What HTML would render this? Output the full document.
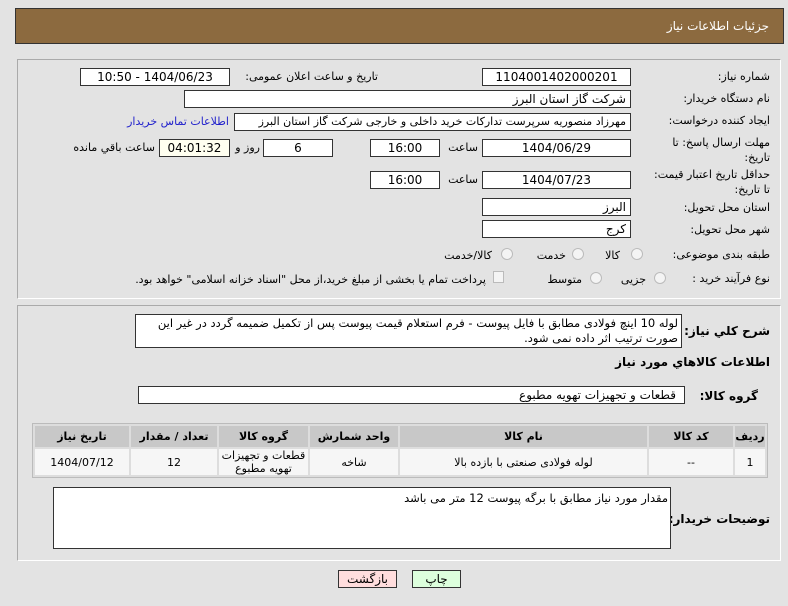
<!DOCTYPE html>
<html><head><meta charset="utf-8"><style>
body{margin:0;width:788px;height:606px;background:#e3e3e3;font-family:"DejaVu Sans","Liberation Sans",sans-serif;font-size:11px;color:#000;position:relative;overflow:hidden}
div,span{position:absolute;box-sizing:border-box}
.hdr{left:15px;top:8px;width:769px;height:36px;background:#8c6a3f;border:1px solid #333}
.hdr span{right:14px;top:10px;color:#fff;font-size:12px}
.pan{left:17px;width:764px;background:#e3e3e3;border:1px solid #aaa;border-right-color:#fff;border-bottom-color:#fff}
.box{background:#fff;border:1px solid #333;height:18px;line-height:16px;text-align:center;direction:rtl;font-size:12px;white-space:nowrap;overflow:hidden}
.l{direction:rtl;white-space:nowrap;font-size:11px}
.r{text-align:right;padding-right:4px}
.rad{width:12px;height:12px;border-radius:50%;border:1px solid #bbb;background:#f4f4f4}
table{position:absolute;border-collapse:separate;border-spacing:2px;direction:rtl;background:#ddd;border:1px solid #bbb}
th{background:#c8c8c8;height:21px;font-size:11px;padding:0}
td{background:#f6f6f6;height:26px;text-align:center;font-size:11px;padding:0}
.btn{height:18px;border:1px solid #333;text-align:center;line-height:16px;font-size:12px}
</style></head><body>
<div class="hdr"><span>جزئیات اطلاعات نیاز</span></div>
<div class="pan" style="top:59px;height:240px"></div>
<div class="pan" style="top:305px;height:256px"></div>

<div class="l" style="right:18px;top:70px">شماره نیاز:</div>
<div class="box" style="left:482px;top:68px;width:149px">1104001402000201</div>
<div class="l" style="right:410px;top:70px">تاریخ و ساعت اعلان عمومی:</div>
<div class="box" style="left:80px;top:68px;width:150px">1404/06/23 - 10:50</div>

<div class="l" style="right:18px;top:92px">نام دستگاه خریدار:</div>
<div class="box r" style="left:184px;top:90px;width:447px">شرکت گاز استان البرز</div>

<div class="l" style="right:18px;top:114px">ایجاد کننده درخواست:</div>
<div class="box r" style="left:234px;top:113px;width:397px;font-size:11px;letter-spacing:-0.3px">مهرزاد منصوریه سرپرست تدارکات خرید داخلی و خارجی شرکت گاز استان البرز</div>
<div class="l" style="right:559px;top:115px;color:#22c">اطلاعات تماس خریدار</div>

<div class="l" style="right:18px;top:135px;line-height:15px;text-align:right">مهلت ارسال پاسخ: تا<br>تاریخ:</div>
<div class="box" style="left:482px;top:139px;width:149px">1404/06/29</div>
<div class="l" style="right:310px;top:141px">ساعت</div>
<div class="box" style="left:370px;top:139px;width:70px">16:00</div>
<div class="box" style="left:263px;top:139px;width:70px">6</div>
<div class="l" style="right:528px;top:141px">روز و</div>
<div class="box" style="left:159px;top:139px;width:71px;background:#fffff0">04:01:32</div>
<div class="l" style="right:633px;top:141px">ساعت باقي مانده</div>

<div class="l" style="right:18px;top:167px;line-height:15px;text-align:right">حداقل تاریخ اعتبار قیمت:<br>تا تاریخ:</div>
<div class="box" style="left:482px;top:171px;width:149px">1404/07/23</div>
<div class="l" style="right:310px;top:173px">ساعت</div>
<div class="box" style="left:370px;top:171px;width:70px">16:00</div>

<div class="l" style="right:18px;top:201px">استان محل تحویل:</div>
<div class="box r" style="left:482px;top:198px;width:149px">البرز</div>
<div class="l" style="right:18px;top:223px">شهر محل تحویل:</div>
<div class="box r" style="left:482px;top:220px;width:149px">کرج</div>

<div class="l" style="right:18px;top:248px">طبقه بندی موضوعی:</div>
<div class="rad" style="left:631px;top:248px"></div><div class="l" style="right:168px;top:249px">کالا</div>
<div class="rad" style="left:572px;top:248px"></div><div class="l" style="right:222px;top:249px">خدمت</div>
<div class="rad" style="left:501px;top:248px"></div><div class="l" style="right:296px;top:249px">کالا/خدمت</div>

<div class="l" style="right:18px;top:272px">نوع فرآیند خرید :</div>
<div class="rad" style="left:654px;top:272px"></div><div class="l" style="right:142px;top:273px">جزیی</div>
<div class="rad" style="left:590px;top:272px"></div><div class="l" style="right:206px;top:273px">متوسط</div>
<div style="left:493px;top:271px;width:11px;height:12px;border:1px solid #bbb;background:#f4f4f4"></div>
<div class="l" style="right:302px;top:273px">پرداخت تمام یا بخشی از مبلغ خرید،از محل "اسناد خزانه اسلامی" خواهد بود.</div>

<div class="l" style="right:18px;top:324px;font-weight:bold;font-size:12px">شرح كلي نياز:</div>
<div style="left:135px;top:314px;width:547px;height:34px;background:#fff;border:1px solid #333;direction:rtl;text-align:right;padding:1px 3px;line-height:15px;font-size:11.5px">لوله 10 اینچ فولادی مطابق با فایل پیوست - فرم استعلام قیمت پیوست پس از تکمیل ضمیمه گردد در غیر این صورت ترتیب اثر داده نمی شود.</div>
<div class="l" style="right:18px;top:355px;font-weight:bold;font-size:12px">اطلاعات كالاهاي مورد نياز</div>
<div class="l" style="right:30px;top:389px;font-weight:bold;font-size:12px">گروه کالا:</div>
<div class="box r" style="left:138px;top:386px;width:547px;padding-right:8px">قطعات و تجهیزات تهویه مطبوع</div>

<table style="left:32px;top:423px;width:736px">
<tr><th style="width:30px">ردیف</th><th style="width:84px">کد کالا</th><th style="width:247px">نام کالا</th><th style="width:88px">واحد شمارش</th><th style="width:89px">گروه کالا</th><th style="width:86px">تعداد / مقدار</th><th>تاریخ نیاز</th></tr>
<tr><td>1</td><td>--</td><td>لوله فولادی صنعتی با بازده بالا</td><td>شاخه</td><td style="line-height:13px">قطعات و تجهیزات<br>تهویه مطبوع</td><td>12</td><td>1404/07/12</td></tr>
</table>

<div class="l" style="right:18px;top:512px;font-weight:bold;font-size:12px">توضیحات خریدار:</div>
<div style="left:53px;top:487px;width:618px;height:62px;background:#fff;border:1px solid #333;direction:rtl;text-align:right;padding:3px 2px;font-size:11.5px">مقدار مورد نیاز مطابق با برگه پیوست 12 متر می باشد</div>

<div class="btn" style="left:338px;top:570px;width:59px;background:#fdd">بازگشت</div>
<div class="btn" style="left:412px;top:570px;width:49px;background:#dfd">چاپ</div>
</body></html>
